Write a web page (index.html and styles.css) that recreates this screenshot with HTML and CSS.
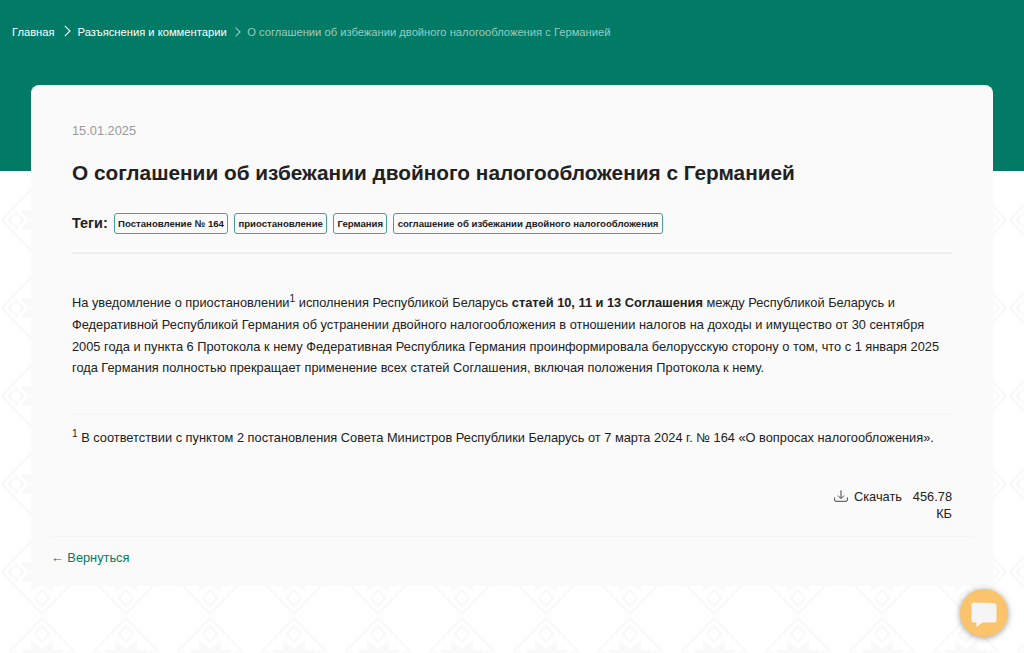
FILE: index.html
```html
<!DOCTYPE html>
<html lang="ru">
<head>
  <meta charset="UTF-8">
  <meta name="viewport" content="width=device-width, initial-scale=1.0">
  <title>О соглашении об избежании двойного налогообложения с Германией</title>
  <link rel="stylesheet" href="styles.css">
</head>
<body>

  <header class="top">
    <nav class="breadcrumbs">
      <a href="#">Главная</a>
      <svg class="arrow" width="7" height="12" viewBox="0 0 7 12"><path d="M.8.8L6 6 .8 11.2"/></svg>
      <a href="#">Разъяснения и комментарии</a>
      <svg class="arrow arrow-last" width="6" height="10" viewBox="0 0 6 10"><path d="M.6.6L5 5 .6 9.4"/></svg>
      <span>О соглашении об избежании двойного налогообложения с Германией</span>
    </nav>
  </header>

  <main class="card">
    <article class="article">
      <div class="date">15.01.2025</div>
      <h1>О соглашении об избежании двойного налогообложения с Германией</h1>

      <div class="tags">
        <b>Теги:</b>
        <a href="#">Постановление № 164</a>
        <a href="#">приостановление</a>
        <a href="#">Германия</a>
        <a href="#">соглашение об избежании двойного налогообложения</a>
      </div>

      <div class="text">
        <p>На уведомление о приостановлении<sup>1</sup> исполнения Республикой Беларусь <b>статей 10, 11 и 13 Соглашения</b> между Республикой Беларусь и Федеративной Республикой Германия об устранении двойного налогообложения в отношении налогов на доходы и имущество от 30 сентября 2005 года и пункта 6 Протокола к нему Федеративная Республика Германия проинформировала белорусскую сторону о том, что с 1 января 2025 года Германия полностью прекращает применение всех статей Соглашения, включая положения Протокола к нему.</p>
        <p class="note"><sup>1</sup> В соответствии с пунктом 2 постановления Совета Министров Республики Беларусь от 7 марта 2024 г. № 164 «О вопросах налогообложения».</p>
      </div>

      <div class="download">
        <svg width="14" height="12" viewBox="0 0 14 12"><path d="M.6 7.5v2.4q0 1.4 1.4 1.4h10q1.4 0 1.4-1.4V7.5M7 .3v8M4 5.6l3 3 3-3"/></svg>
        <a href="#">Скачать</a>
        <span class="size">456.78 КБ</span>
      </div>
    </article>

    <div class="back"><a href="#">← Вернуться</a></div>
  </main>

  <button class="chat" aria-label="Чат">
    <svg width="26" height="26" viewBox="0 0 26 26"><path d="M3 .5L23 1q2.5 0 2.5 2.5V18q0 2.500-2.500 2.500H11.500L5.500 25v-4.500H3Q.5 20.500.5 18V3Q.5.5 3 .5z"/></svg>
  </button>

</body>
</html>
```
FILE: styles.css
```css
* {
  box-sizing: border-box;
}

body {
  margin: 0;
  height: 653px;
  overflow: hidden;
  font-family: "Liberation Sans", Arial, sans-serif;
  font-size: 12.8px;
  color: #212121;
  background: #fff url("data:image/svg+xml,%3Csvg xmlns='http://www.w3.org/2000/svg' width='84' height='88' viewBox='0 0 84 88'%3E%3Cg fill='none' stroke='%23f9f9f9' stroke-width='2.5'%3E%3Cpath d='M42 2L82 44 42 86 2 44z'/%3E%3Cpath d='M42 10l7 8-7 8-7-8zM42 62l7 8-7 8-7-8zM16 36l7 8-7 8-7-8zM68 36l7 8-7 8-7-8z'/%3E%3C/g%3E%3Cpath fill='%23f9f9f9' d='M42 43L31 35V25l5 2 6 7 6-7 5-2v10zM42 45L31 53v10l5-2 6-7 6 7 5 2V53zM41 44L31 54H20l4-5 5-5-5-5-4-5h11zM43 44l10 10h11l-4-5-5-5 5-5 4-5H53z'/%3E%3C/svg%3E");
}

a {
  color: inherit;
  text-decoration: none;
}

.top {
  height: 171px;
  padding: 24px 12px;
  background: #017b65;
}

.breadcrumbs {
  display: flex;
  align-items: center;
  height: 16px;
  font-size: 11.2px;
  color: #fff;
}

.breadcrumbs span {
  color: #99cbc2;
}

.arrow {
  margin: 0 7px 2px 9px;
  fill: none;
  stroke: #fff;
  stroke-width: 1.1;
}

.arrow-last {
  margin: 0 6px 0 8.5px;
  stroke: #99cbc2;
}

.card {
  width: 962px;
  height: 501px;
  margin: -86px 31px 0;
  border-radius: 8px 8px 0 0;
  background: #fafafa;
}

.article {
  height: 451px;
  padding: 38px 41px 0;
}

.date {
  line-height: 15px;
  color: #999;
}

h1 {
  margin: 21px 0 0;
  font-size: 20.8px;
  line-height: 28px;
}

.tags {
  display: flex;
  align-items: center;
  gap: 6.2px;
  height: 58px;
  margin-top: 9px;
  padding-bottom: 2px;
  border-bottom: 2px solid #eee;
}

.tags b {
  font-size: 14.4px;
}

.tags a {
  height: 21px;
  padding: 0 3.2px;
  border: 1px solid #45a393;
  border-radius: 3px;
  font-size: 9.6px;
  font-weight: bold;
  line-height: 19px;
}

.text {
  padding-top: 38.2px;
  line-height: 21.76px;
}

.text p {
  margin: 0;
}

.text sup {
  font-size: 10.2px;
  line-height: 1;
}

.text .note {
  margin-top: 34.5px;
  padding-top: 12.5px;
  border-top: 1px solid #f4f4f4;
}

.download {
  display: flex;
  justify-content: flex-end;
  margin-top: 39px;
  line-height: 17px;
}

.download svg {
  margin: 2px 6px 0 0;
  fill: none;
  stroke: #444;
}

.download .size {
  width: 50px;
  text-align: right;
}

.back {
  margin: 0 20px;
  padding-top: 12px;
  border-top: 1px solid #f4f4f4;
  line-height: 17px;
  color: #017b65;
}

.chat {
  position: fixed;
  right: 16px;
  bottom: 16px;
  display: flex;
  align-items: center;
  justify-content: center;
  width: 48px;
  height: 48px;
  padding: 0;
  border: none;
  border-radius: 50%;
  background: #fbc36c;
  box-shadow: 0 1px 6px rgba(0, 0, 0, 0.4);
}

.chat svg {
  margin-top: 4px;
  fill: #f5f5f5;
}
```
